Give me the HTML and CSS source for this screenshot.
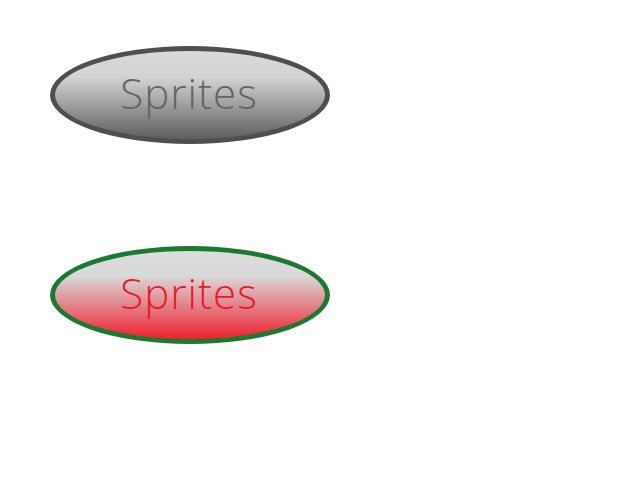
FILE: index.html
```html
<!DOCTYPE html>
<html>
<head>
<meta charset="utf-8">
<link rel="stylesheet" href="styles.css">
</head>
<body>
<div class="stack">
  <div class="pill pill-grey"><span class="label">Sprites</span></div>
  <div class="pill pill-red"><span class="label">Sprites</span></div>
</div>
</body>
</html>
```
FILE: styles.css
```css
html, body {
  margin: 0;
  padding: 0;
  background: #ffffff;
}
.stack {
  display: flex;
  flex-direction: column;
  gap: 102px;
  padding: 46px 0 0 50px;
}
.pill {
  box-sizing: border-box;
  width: 280px;
  height: 98px;
  border-radius: 50%;
  border: 5px solid #4f4f4f;
  display: flex;
  align-items: center;
  justify-content: center;
}
.pill-grey {
  background: linear-gradient(to bottom, #d9d9d9 0%, #d3d3d3 30%, #5e5e5e 100%);
  color: #656565;
}
.pill-red {
  border-color: #1a7a30;
  background: linear-gradient(to bottom, #dddddd 0%, #d9d9d9 28%, #ef2030 100%);
  color: #e81b27;
}
.label {
  font-family: "Open Sans", "Noto Sans", sans-serif;
  font-weight: 350;
  font-size: 42px;
  letter-spacing: 1px;
  line-height: 1;
  margin-top: -4px;
  margin-right: 2px;
}
```
